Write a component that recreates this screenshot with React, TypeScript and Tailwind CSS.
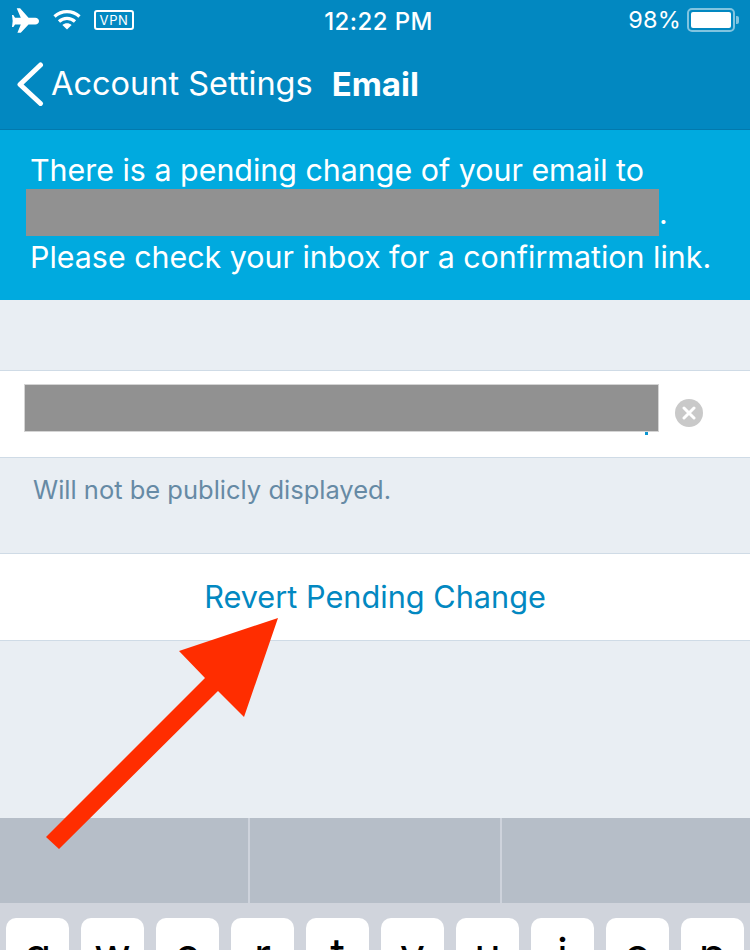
const keys = ["q", "w", "e", "r", "t", "y", "u", "i", "o", "p"];

function StatusBar() {
  return (
    <div className="relative flex h-[40px] items-center justify-between pl-[12px] pr-[11px] text-white">
      <div className="flex items-center">
        <svg width="27" height="25" viewBox="36 22 80 73" fill="white">
          <path d="M50 22h10l25 28h20c6 0 11 4 11 10s-5 10-11 10H85L62 95H52l10-25H45l-5 8h-4l2-18-2-18h4l5 8h17z" />
        </svg>
        <svg className="ml-[14px]" width="28" height="22" viewBox="0 0 28 22" fill="none" stroke="white" strokeWidth="3.200">
          <path d="M1.500 7.500c7-6.600 18-6.600 25 0" />
          <path d="M6 12.500c4.600-4.300 11.400-4.300 16 0" />
          <path d="M14 20.500l-4.600-4.500c2.600-2.300 6.600-2.300 9.200 0z" fill="white" stroke="none" />
        </svg>
        <div className="ml-[13px] flex h-[20px] w-[40px] items-center justify-center rounded-[3px] border-2 border-white text-[13px] leading-none tracking-[0.6px]">
          VPN
        </div>
      </div>
      <div className="absolute left-[7px] right-0 top-[9px] text-center text-[24px] font-medium leading-[26px] tracking-[0.4px]">
        12:22 PM
      </div>
      <div className="flex items-center">
        <span className="text-[23.500px] leading-[26px] tracking-[0.2px]">98%</span>
        <div className="ml-[6px] flex h-[24px] w-[48px] items-center rounded-[5px] border-2 border-white/50 p-[2px]">
          <div className="h-full w-full rounded-[2px] bg-white" />
        </div>
        <div className="ml-[1px] h-[8px] w-[3px] rounded-r-[2px] bg-white/50" />
      </div>
    </div>
  );
}

function Header() {
  return (
    <div className="h-[130px] bg-[#0288c1] border-b border-[#0279ad]">
      <StatusBar />
      <div className="flex h-[88px] items-center text-white">
        <svg className="ml-[16px]" width="28" height="44" viewBox="0 0 28 44" fill="none" stroke="white" strokeWidth="5" strokeLinecap="round" strokeLinejoin="round">
          <path d="M24.500 3 4 22.500 24.500 41.500" />
        </svg>
        <span className="ml-[7px] mt-[1px] text-[32.500px] leading-none">Account Settings</span>
        <span className="ml-[19px] text-[33px] font-bold leading-none">Email</span>
      </div>
    </div>
  );
}

export default function App() {
  return (
    <div
      className="relative h-[950px] w-[750px] overflow-hidden bg-[#e9eef3]"
      style={{ fontFamily: "Inter, 'Noto Sans', sans-serif" }}
    >
      <Header />

      <div className="flex h-[170px] flex-col bg-[#00aadf] pl-[30px] pt-[19px] text-[30.400px] leading-[43px] text-white">
        <div>There is a pending change of your email to</div>
        <div className="flex h-[44px]">
          <div className="-ml-[4px] mt-[-3px] h-[47px] w-[633px] bg-[#919191]" />
          <span>.</span>
        </div>
        <div>Please check your inbox for a confirmation link.</div>
      </div>

      <div className="mt-[70px] flex h-[88px] border-y border-[#cfdbe6] bg-white pl-[24px] pt-[13px]">
        <div className="relative h-[48px] w-[635px] border border-[#d4d4d4] bg-[#919191]">
          <div className="absolute bottom-[-4px] right-[10px] h-[3px] w-[3px] bg-[#0a96d2]" />
        </div>
        <div className="ml-[16px] mt-[15px] flex h-[28px] w-[28px] items-center justify-center rounded-full bg-[#c9c9c9]">
          <svg width="14" height="14" viewBox="0 0 14 14" stroke="white" strokeWidth="3" strokeLinecap="round">
            <path d="M2 2l10 10M12 2 2 12" />
          </svg>
        </div>
      </div>

      <div className="h-[95px] pl-[33px] pt-[16px] text-[25.500px] leading-[32px] text-[#668aa5]">
        Will not be publicly displayed.
      </div>

      <div className="flex h-[88px] items-center justify-center border-y border-[#cfdbe6] bg-white text-[30.700px] text-[#0288c1]">
        Revert Pending Change
      </div>

      <div className="h-[177px]" />

      <div className="flex h-[85px] bg-[#b6bec8]">
        <div className="w-[250px] border-r-2 border-[#ced3dc]" />
        <div className="w-[252px] border-r-2 border-[#ced3dc]" />
        <div className="flex-1" />
      </div>

      <div className="flex h-[200px] gap-[12px] bg-[#d0d4dc] pl-[6px] pt-[15px]">
        {keys.map((k) => (
          <div key={k} className="flex h-[86px] w-[63px] justify-center rounded-[10px] bg-white pt-[9px] text-[45px] leading-[56px] text-black">
            {k}
          </div>
        ))}
      </div>

      {/* annotation arrow */}
      <svg className="absolute left-0 top-0" width="750" height="950" fill="#ff2d00">
        <path d="M278 618 179 651 205 678 46 837 59 849 218 691 244 717z" />
      </svg>
    </div>
  );
}
